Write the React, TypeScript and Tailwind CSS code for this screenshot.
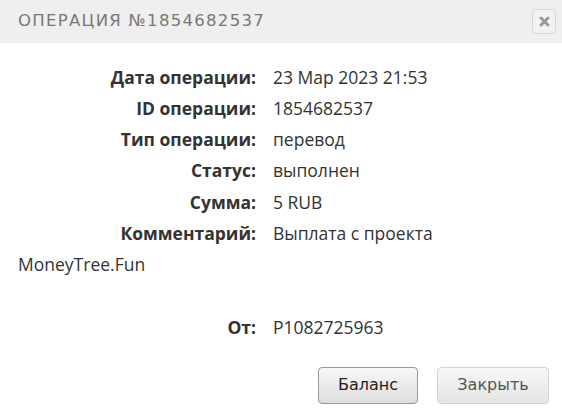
import React from 'react';

const rows: [string, string][] = [
  ['Дата операции:', '23 Мар 2023 21:53'],
  ['ID операции:', '1854682537'],
  ['Тип операции:', 'перевод'],
  ['Статус:', 'выполнен'],
  ['Сумма:', '5 RUB'],
  ['Комментарий:', 'Выплата с проекта'],
];

const Row = ({ label, value }: { label: string; value: string }) => (
  <div className="grid h-[31.3px] grid-cols-[256px_1fr] items-center gap-x-[17px]">
    <span className="text-right font-bold text-[#333]">{label}</span>
    <span className="text-[#333]">{value}</span>
  </div>
);

export default function App() {
  return (
    <div className="h-[416px] w-[562px] overflow-hidden bg-white font-['Open_Sans',sans-serif] text-[17.5px]">
      {/* Header */}
      <div className="flex h-[43px] items-center justify-between bg-[#efefef] pl-[18px] pr-[6px]">
        <h1 className="font-['DejaVu_Sans',sans-serif] text-[16.5px] tracking-[1.3px] text-[#787878]">
          ОПЕРАЦИЯ №1854682537
        </h1>
        <button
          aria-label="Close"
          className="flex h-[25px] w-[24px] items-center justify-center rounded-[4px] border border-[#d8d8d8] bg-[#f2f2f2]"
        >
          <svg width="11" height="11" viewBox="0 0 11 11">
            <path d="M2 2 L9 9 M9 2 L2 9" stroke="#999" strokeWidth="3" strokeLinecap="round" />
          </svg>
        </button>
      </div>

      {/* Details */}
      <div className="pt-[18px]">
        {rows.map(([l, v]) => (
          <Row key={l} label={l} value={v} />
        ))}
        <div className="flex h-[31.3px] items-center pl-[18px] text-[#333]">MoneyTree.Fun</div>
        <div className="h-[31.3px]" />
        <Row label="От:" value="P1082725963" />
      </div>

      {/* Actions */}
      <div className="mt-[24px] flex justify-end gap-[19px] pr-[13px] font-['DejaVu_Sans',sans-serif] text-[16px]">
        <button className="h-[37px] w-[100px] rounded-[4px] border border-[#9a9a9a] bg-gradient-to-b from-[#f7f7f7] to-[#dedede] text-[#222]">
          Баланс
        </button>
        <button className="h-[37px] w-[112px] rounded-[4px] border border-[#d4d4d4] bg-gradient-to-b from-[#f7f7f7] to-[#e4e4e4] text-[#555]">
          Закрыть
        </button>
      </div>
    </div>
  );
}
